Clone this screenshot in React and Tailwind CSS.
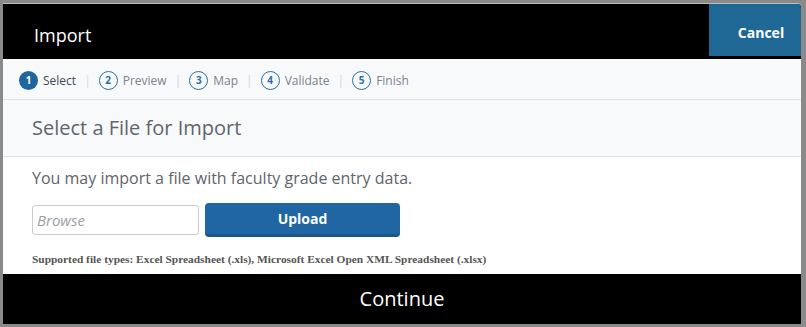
import React from "react";

const steps = [
  { n: 1, label: "Select", active: true },
  { n: 2, label: "Preview" },
  { n: 3, label: "Map" },
  { n: 4, label: "Validate" },
  { n: 5, label: "Finish" },
];

export default function App() {
  return (
    <div className="w-[806px] h-[327px] bg-[#8a8a8a] pt-[3px] pl-[3px] overflow-hidden" style={{ fontFamily: '"Open Sans", sans-serif' }}>
      <div className="w-[798px] h-[321px] flex flex-col bg-white rounded-tr-[4px] overflow-hidden border-t border-[#bdbdbd]">
        <div className="h-[55px] bg-black flex items-start justify-between shrink-0">
          <div className="text-white text-[18px] pl-[31px] pt-[17px] leading-[28px]">Import</div>
          <button className="w-[92px] h-[52px] bg-[#1f6896] text-white text-[14px] font-bold rounded-tr-[4px] flex items-center justify-center pt-[4px] pl-[12px]">
            Cancel
          </button>
        </div>
        <div className="h-[41px] bg-[#f8f9fb] border-b border-[#dfe2e6] flex items-center pl-[16px] pt-[3px] shrink-0">
          {steps.map((s, i) => (
            <div key={s.n} className="flex items-center">
              <span
                className={
                  s.active
                    ? "w-[19px] h-[19px] rounded-full bg-[#1e66a0] text-white text-[10px] font-bold flex items-center justify-center"
                    : "w-[19px] h-[19px] rounded-full border-[1.5px] border-[#2a6fa5] text-[#2a6fa5] text-[10px] font-bold flex items-center justify-center"
                }
              >
                {s.n}
              </span>
              <span className={s.active ? "ml-[5px] text-[12px] text-[#3f4a55]" : "ml-[5px] text-[12px] text-[#7b838c]"}>
                {s.label}
              </span>
              {i < steps.length - 1 && <span className="mx-[8px] text-[12px] text-[#d4d7db]">|</span>}
            </div>
          ))}
        </div>
        <div className="h-[57px] bg-[#f8f9fb] border-b border-[#dfe2e6] flex items-center pl-[29px] shrink-0">
          <span className="text-[20px] text-[#5f656b]">Select a File for Import</span>
        </div>
        <div className="flex-1 bg-white pl-[29px]">
          <div className="pt-[9px] text-[16px] text-[#5f656b] leading-[24px]">You may import a file with faculty grade entry data.</div>
          <div className="flex items-center mt-[13px] gap-[6px]">
            <div className="w-[167px] h-[30px] border border-[#c9cdd1] rounded-[3px] flex items-center pl-[4px] text-[15px] italic text-[#9aa0a6]">
              Browse
            </div>
            <button className="w-[195px] h-[34px] bg-[#1f66a3] border-b-[3px] border-[#1a5686] rounded-[4px] text-white text-[14px] font-bold flex items-center justify-center">
              Upload
            </button>
          </div>
          <div className="mt-[14px] text-[11.4px] font-bold text-[#555]" style={{ fontFamily: '"Liberation Serif", serif' }}>
            Supported file types: Excel Spreadsheet (.xls), Microsoft Excel Open XML Spreadsheet (.xlsx)
          </div>
        </div>
        <div className="h-[50px] bg-black flex items-center justify-center text-white text-[20px] shrink-0">
          Continue
        </div>
      </div>
    </div>
  );
}
